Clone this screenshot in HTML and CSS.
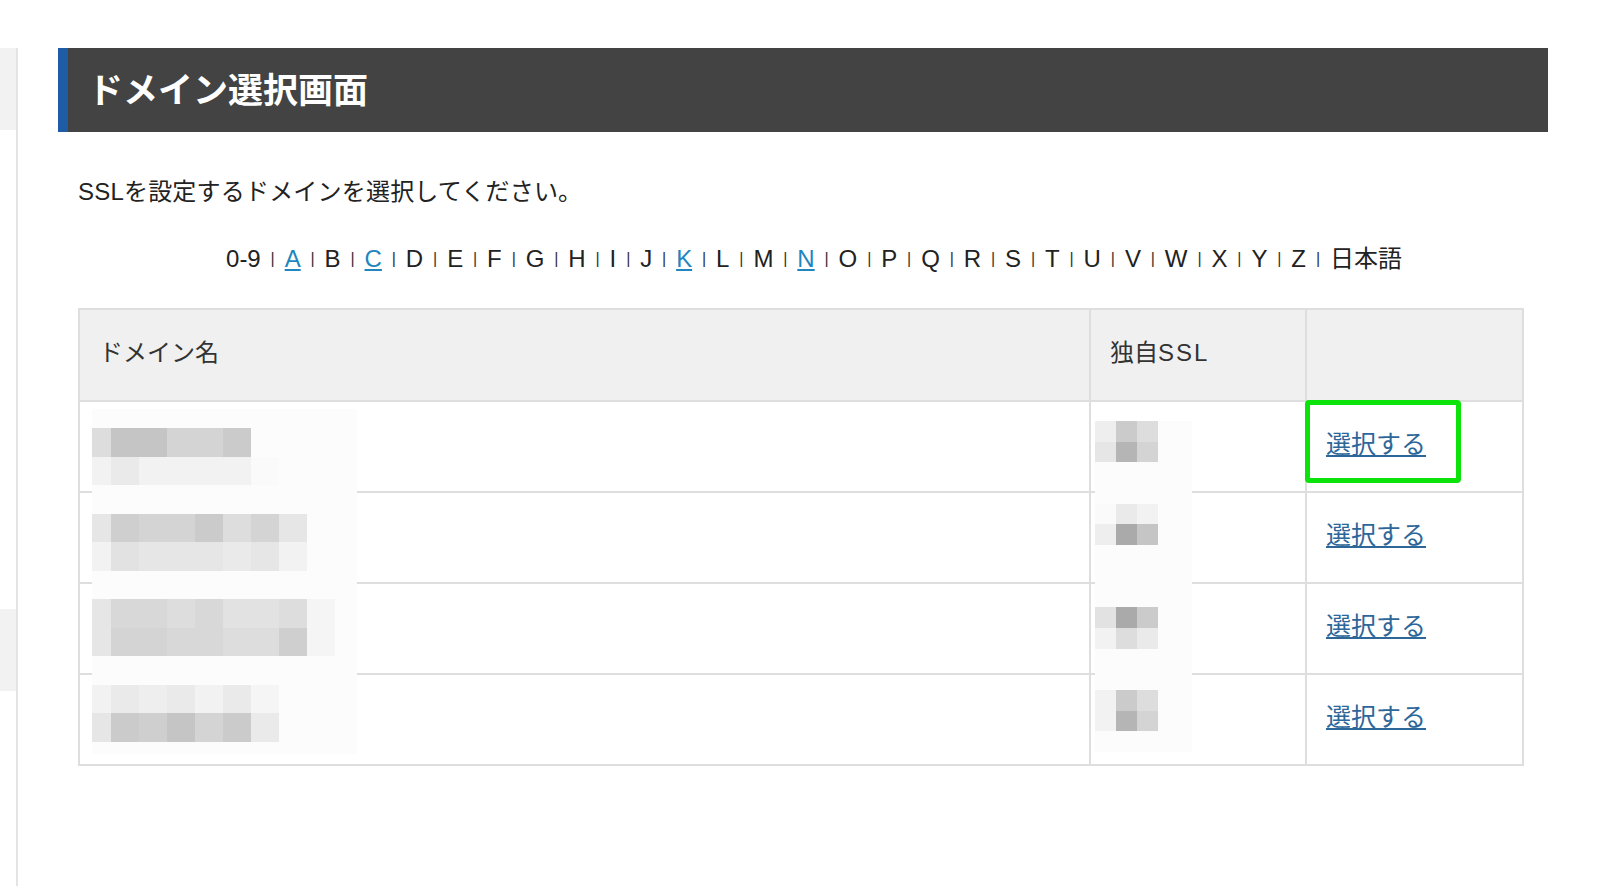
FILE: index.html
```html
<!DOCTYPE html>
<html lang="ja">
<head>
<meta charset="utf-8">
<title>ドメイン選択画面</title>
<link rel="stylesheet" href="styles.css">
</head>
<body>
<div class="page">
  <aside class="sidebar">
    <div class="side-item"></div>
    <div class="side-item second"></div>
  </aside>
  <main class="main">
    <h1 class="title">ドメイン選択画面</h1>
    <div class="content">
      <p class="lead">SSLを設定するドメインを選択してください。</p>
      <p class="index">0-9<span class="sep">|</span><a href="#">A</a><span class="sep">|</span>B<span class="sep">|</span><a href="#">C</a><span class="sep">|</span>D<span class="sep">|</span>E<span class="sep">|</span>F<span class="sep">|</span>G<span class="sep">|</span>H<span class="sep">|</span>I<span class="sep">|</span>J<span class="sep">|</span><a href="#">K</a><span class="sep">|</span>L<span class="sep">|</span>M<span class="sep">|</span><a href="#">N</a><span class="sep">|</span>O<span class="sep">|</span>P<span class="sep">|</span>Q<span class="sep">|</span>R<span class="sep">|</span>S<span class="sep">|</span>T<span class="sep">|</span>U<span class="sep">|</span>V<span class="sep">|</span>W<span class="sep">|</span>X<span class="sep">|</span>Y<span class="sep">|</span>Z<span class="sep">|</span>日本語</p>
      <div class="table-wrap">
        <table class="domains">
          <colgroup><col class="c-name"><col class="c-ssl"><col class="c-act"></colgroup>
          <thead>
            <tr><th>ドメイン名</th><th>独自<span class="latin-wide">SSL</span></th><th></th></tr>
          </thead>
          <tbody>
            <tr><td></td><td></td><td><a class="select" href="#">選択する</a></td></tr>
            <tr><td></td><td></td><td><a class="select" href="#">選択する</a></td></tr>
            <tr><td></td><td></td><td><a class="select" href="#">選択する</a></td></tr>
            <tr><td></td><td></td><td><a class="select" href="#">選択する</a></td></tr>
          </tbody>
        </table>

        <div class="mosaic mosaic-name">
          <div class="mz-row top"></div>
          <div class="mz-row"><i class="g-dd"></i><i class="g-c5"></i><i class="g-c5"></i><i class="g-d4"></i><i class="g-d4"></i><i class="g-cb"></i></div>
          <div class="mz-row"><i class="g-f2"></i><i class="g-ea"></i><i class="g-f2"></i><i class="g-f2"></i><i class="g-f2"></i><i class="g-f2"></i><i class="g-fa"></i></div>
          <div class="mz-row"></div>
          <div class="mz-row"><i class="g-e6"></i><i class="g-cf"></i><i class="g-d4"></i><i class="g-d4"></i><i class="g-cb"></i><i class="g-dd"></i><i class="g-d4"></i><i class="g-e6"></i></div>
          <div class="mz-row"><i class="g-f2"></i><i class="g-e2"></i><i class="g-e6"></i><i class="g-e6"></i><i class="g-e6"></i><i class="g-ea"></i><i class="g-e6"></i><i class="g-f2"></i></div>
          <div class="mz-row"></div>
          <div class="mz-row"><i class="g-e6"></i><i class="g-d8"></i><i class="g-d8"></i><i class="g-dd"></i><i class="g-d8"></i><i class="g-e2"></i><i class="g-e2"></i><i class="g-dd"></i><i class="g-f5"></i></div>
          <div class="mz-row"><i class="g-e6"></i><i class="g-d4"></i><i class="g-d4"></i><i class="g-d8"></i><i class="g-d8"></i><i class="g-dd"></i><i class="g-dd"></i><i class="g-cf"></i><i class="g-f5"></i></div>
          <div class="mz-row"></div>
          <div class="mz-row"><i class="g-f2"></i><i class="g-ea"></i><i class="g-ee"></i><i class="g-ea"></i><i class="g-f2"></i><i class="g-ea"></i><i class="g-f5"></i></div>
          <div class="mz-row"><i class="g-e6"></i><i class="g-cb"></i><i class="g-cf"></i><i class="g-c5"></i><i class="g-d4"></i><i class="g-cb"></i><i class="g-ea"></i></div>
          <div class="mz-row end"></div>
        </div>

        <div class="mosaic mosaic-ssl">
          <div class="mz-row"><i class="g-ee"></i><i class="g-cb"></i><i class="g-dd"></i></div>
          <div class="mz-row"><i class="g-e6"></i><i class="g-b5"></i><i class="g-d4"></i></div>
          <div class="mz-row"></div>
          <div class="mz-row"></div>
          <div class="mz-row"><i class="g-fa"></i><i class="g-ea"></i><i class="g-f2"></i></div>
          <div class="mz-row"><i class="g-ee"></i><i class="g-aa"></i><i class="g-c5"></i></div>
          <div class="mz-row"></div>
          <div class="mz-row"></div>
          <div class="mz-row"></div>
          <div class="mz-row"><i class="g-e2"></i><i class="g-aa"></i><i class="g-cb"></i></div>
          <div class="mz-row"><i class="g-f2"></i><i class="g-dd"></i><i class="g-ea"></i></div>
          <div class="mz-row"></div>
          <div class="mz-row"></div>
          <div class="mz-row"><i class="g-f2"></i><i class="g-cb"></i><i class="g-dd"></i></div>
          <div class="mz-row"><i class="g-f2"></i><i class="g-b5"></i><i class="g-d4"></i></div>
          <div class="mz-row"></div>
        </div>

        <div class="highlight"></div>
      </div>
    </div>
  </main>
</div>
</body>
</html>
```

FILE: styles.css
```css
html, body {
  margin: 0;
  padding: 0;
  background: #ffffff;
}

body {
  font-family: "Liberation Sans", "Noto Sans CJK JP", sans-serif;
  color: #222222;
}

.page {
  display: flex;
  align-items: flex-start;
  min-height: 886px;
}

/* left navigation strip (cropped) */
.sidebar {
  flex: none;
  width: 16px;
  margin-top: 48px;
  min-height: 838px;
  border-right: 2px solid #e4e4e4;
  display: flex;
  flex-direction: column;
}

.side-item {
  height: 82px;
  background: #f2f2f2;
}

.side-item.second {
  margin-top: 479px;
}

/* main column */
.main {
  flex: none;
  width: 1490px;
  margin-left: 40px;
  padding-top: 48px;
}

.title {
  margin: 0;
  height: 84px;
  box-sizing: border-box;
  display: flex;
  align-items: center;
  padding: 0 0 6px 20px;
  background: #434343;
  border-left: 10px solid #1e5ca5;
  color: #ffffff;
  font-size: 35px;
  font-weight: 700;
}

.content {
  padding: 0 26px 0 20px;
}

.lead {
  margin: 42px 0 0;
  font-size: 24px;
  line-height: 36px;
  color: #222222;
  letter-spacing: 0.2px;
}

.index {
  margin: 31px 0 0;
  padding-left: 28px;
  text-align: center;
  font-size: 24px;
  line-height: 36px;
  color: #222222;
  white-space: nowrap;
}

.index a {
  color: #1f86bf;
  text-decoration: underline;
}

.sep {
  font-size: 16px;
  margin: 0 9.9px;
  vertical-align: 3px;
  color: #333333;
}

/* table */
.table-wrap {
  position: relative;
  margin-top: 31px;
  width: 1444px;
}

.domains {
  width: 1444px;
  border-collapse: collapse;
  table-layout: fixed;
}

.c-name { width: 1011px; }
.c-ssl { width: 216px; }
.c-act { width: 217px; }

.domains th,
.domains td {
  border: 2px solid #dedede;
  padding: 0 19px 10px;
  text-align: left;
  vertical-align: middle;
  font-size: 24px;
  font-weight: normal;
  color: #333333;
}

.domains th {
  height: 80px;
  background: #f0f0f0;
}

.domains td {
  height: 79px;
  background: #ffffff;
}

.latin-wide {
  letter-spacing: 2px;
}

.select {
  color: #2d6699;
  text-decoration: underline;
  font-size: 25px;
}

/* pixelated (blurred) domain data */
.mosaic {
  position: absolute;
  background: #fcfcfc;
}

.mosaic-name {
  left: 14px;
  top: 101px;
  width: 265px;
}

.mosaic-ssl {
  left: 1017px;
  top: 113px;
  width: 97px;
}

.mz-row {
  display: flex;
  height: 28.5px;
}

.mz-row.top { height: 19px; }
.mz-row.end { height: 12px; }

.mz-row i {
  flex: none;
  width: 28px;
}

.mz-row i:first-child {
  width: 19px;
}

.mosaic-ssl .mz-row {
  height: 20.7px;
}

.mosaic-ssl .mz-row i,
.mosaic-ssl .mz-row i:first-child {
  width: 21px;
}

.g-fa { background: #fafafa; }
.g-f5 { background: #f5f5f5; }
.g-f2 { background: #f2f2f2; }
.g-ee { background: #eeeeee; }
.g-ea { background: #eaeaea; }
.g-e6 { background: #e6e6e6; }
.g-e2 { background: #e2e2e2; }
.g-dd { background: #dddddd; }
.g-d8 { background: #d8d8d8; }
.g-d4 { background: #d4d4d4; }
.g-cf { background: #cfcfcf; }
.g-cb { background: #cbcbcb; }
.g-c5 { background: #c5c5c5; }
.g-b5 { background: #b5b5b5; }
.g-aa { background: #aaaaaa; }

/* annotation box over the first "選択する" cell */
.highlight {
  position: absolute;
  left: 1227px;
  top: 92px;
  width: 156px;
  height: 83px;
  box-sizing: border-box;
  border: 5px solid #0be30b;
  border-radius: 4px;
}
```
